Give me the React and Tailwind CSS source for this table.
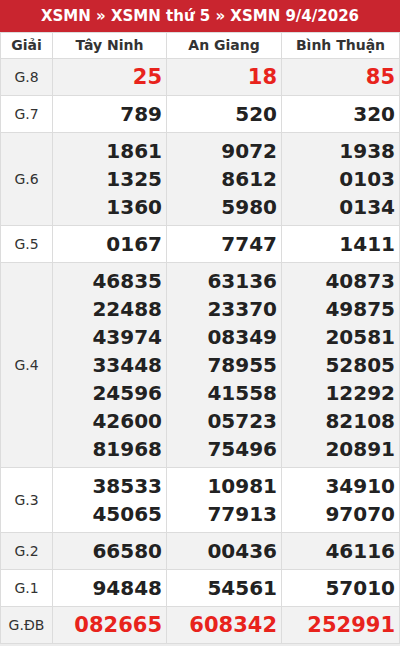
const provinces = ['Tây Ninh', 'An Giang', 'Bình Thuận']

const rows = [
  { label: 'G.8', red: true, values: [['25'], ['18'], ['85']] },
  { label: 'G.7', values: [['789'], ['520'], ['320']] },
  { label: 'G.6', values: [['1861', '1325', '1360'], ['9072', '8612', '5980'], ['1938', '0103', '0134']] },
  { label: 'G.5', values: [['0167'], ['7747'], ['1411']] },
  {
    label: 'G.4',
    values: [
      ['46835', '22488', '43974', '33448', '24596', '42600', '81968'],
      ['63136', '23370', '08349', '78955', '41558', '05723', '75496'],
      ['40873', '49875', '20581', '52805', '12292', '82108', '20891'],
    ],
  },
  { label: 'G.3', values: [['38533', '45065'], ['10981', '77913'], ['34910', '97070']] },
  { label: 'G.2', values: [['66580'], ['00436'], ['46116']] },
  { label: 'G.1', values: [['94848'], ['54561'], ['57010']] },
  { label: 'G.ĐB', red: true, values: [['082665'], ['608342'], ['252991']] },
]

export default function App() {
  return (
    <div className="w-[400px] bg-[#ececec] pb-[2px]" style={{ fontFamily: '"DejaVu Sans", Verdana, sans-serif' }}>
      {/* Title bar */}
      <div className="h-[32px] bg-[#c9252f] flex items-center justify-center text-white font-bold text-[15px]">
        XSMN » XSMN thứ 5 » XSMN 9/4/2026
      </div>

      <table className="w-[399px] table-fixed border-collapse bg-white text-[#222]">
        <colgroup>
          <col className="w-[52px]" />
          <col className="w-[114px]" />
          <col className="w-[115px]" />
          <col className="w-[118px]" />
        </colgroup>
        <thead>
          <tr className="h-[26px]">
            <th className="border border-[#dcdcdc] text-[14px] font-bold text-[#333]">Giải</th>
            {provinces.map(p => (
              <th key={p} className="border border-[#dcdcdc] text-[14px] font-bold text-[#333]">{p}</th>
            ))}
          </tr>
        </thead>
        <tbody>
          {rows.map((row, i) => (
            <tr key={row.label} className={i % 2 === 0 ? 'bg-[#f2f2f2]' : 'bg-white'}>
              <td className="border border-[#dcdcdc] text-center text-[14px] text-[#333]">{row.label}</td>
              {row.values.map((nums, j) => (
                <td key={j} className="border border-[#dcdcdc] py-[4px] pr-[4px] text-right align-middle">
                  {nums.map((n, k) => (
                    <div
                      key={k}
                      className={`leading-[28px] font-bold ${row.red ? 'text-[21px] text-[#e8231c]' : 'text-[20px]'}`}
                    >
                      {n}
                    </div>
                  ))}
                </td>
              ))}
            </tr>
          ))}
        </tbody>
      </table>
    </div>
  )
}
